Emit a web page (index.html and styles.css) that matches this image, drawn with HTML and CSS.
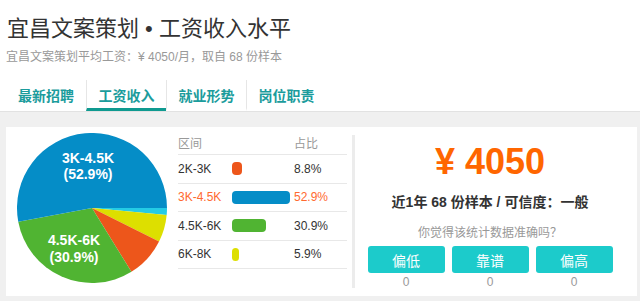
FILE: index.html
```html
<!DOCTYPE html>
<html lang="zh-CN">

<head>
	<meta charset="UTF-8">
	<meta name="viewport" content="width=device-width, initial-scale=1.0">
	<title>宜昌文案策划工资收入水平</title>
	<link rel="stylesheet" href="styles.css">
</head>

<body>
	<div class="head">
		<h1>宜昌文案策划 • 工资收入水平</h1>
		<p class="sub">宜昌文案策划平均工资：¥ 4050/月，取自 68 份样本</p>
	</div>

	<ul class="tabs">
		<li>最新招聘</li>
		<li class="active">工资收入</li>
		<li>就业形势</li>
		<li>岗位职责</li>
	</ul>

	<div class="main">
		<div class="card">
			<div class="chart">
				<!-- Salary distribution pie -->
				<svg class="pie" width="150" height="151" viewBox="0 0 150 151">
					<path fill="#24cbe5" d="M75,75 L150,75 A75,75 0 0,1 149.67,82.06 Z"></path>
					<path fill="#dddf00" d="M75,75 L149.67,82.06 A75,75 0 0,1 142.06,108.58 Z"></path>
					<path fill="#ed561b" d="M75,75 L142.06,108.58 A75,75 0 0,1 114.41,138.81 Z"></path>
					<path fill="#50b432" d="M75,75 L114.41,138.81 A75,75 0 0,1 1.26,88.67 Z"></path>
					<path fill="#058dc7" d="M75,75 L1.26,88.67 A75,75 0 1,1 150,75 Z"></path>
					<text class="pie-label" x="71" y="29.5">3K-4.5K</text>
					<text class="pie-label" x="71" y="46">(52.9%)</text>
					<text class="pie-label" x="57" y="112">4.5K-6K</text>
					<text class="pie-label" x="57" y="129">(30.9%)</text>
				</svg>

				<div class="dist">
					<div class="row row-head">
						<span class="range">区间</span>
						<span class="bar-cell"></span>
						<span class="pct">占比</span>
					</div>
					<div class="row">
						<span class="range">2K-3K</span>
						<span class="bar-cell"><i class="bar orange" style="width: 9.7px;"></i></span>
						<span class="pct">8.8%</span>
					</div>
					<div class="row current">
						<span class="range">3K-4.5K</span>
						<span class="bar-cell"><i class="bar blue" style="width: 58px;"></i></span>
						<span class="pct">52.9%</span>
					</div>
					<div class="row">
						<span class="range">4.5K-6K</span>
						<span class="bar-cell"><i class="bar green" style="width: 34px;"></i></span>
						<span class="pct">30.9%</span>
					</div>
					<div class="row">
						<span class="range">6K-8K</span>
						<span class="bar-cell"><i class="bar yellow" style="width: 6.5px;"></i></span>
						<span class="pct">5.9%</span>
					</div>
				</div>
			</div>

			<div class="summary">
				<div class="price">¥ 4050</div>
				<div class="stat">近1年 68 份样本 / 可信度：一般</div>
				<div class="ask">你觉得该统计数据准确吗？</div>
				<div class="votes">
					<div class="vote"><button>偏低</button><span>0</span></div>
					<div class="vote"><button>靠谱</button><span>0</span></div>
					<div class="vote"><button>偏高</button><span>0</span></div>
				</div>
			</div>
		</div>
	</div>
</body>

</html>
```

FILE: styles.css
```css
body {
	margin: 0;
	font-family: 'Liberation Sans', 'Noto Sans CJK SC', sans-serif;
	color: #333333;
	background-color: #ffffff;
}

.head {
	padding: 14px 0 0 6px;
}

.head h1 {
	margin: 0 0 0 1px;
	font-size: 22px;
	font-weight: normal;
	line-height: 30px;
	color: #333333;
}

.head .sub {
	margin: 4px 0 0;
	font-size: 12px;
	line-height: 18px;
	color: #999999;
}

.tabs {
	list-style: none;
	display: flex;
	margin: 14px 0 0 6px;
	padding: 0;
}

.tabs li {
	box-sizing: border-box;
	width: 80px;
	padding: 6px 0 2px;
	line-height: 20px;
	text-align: center;
	font-size: 14px;
	font-weight: bold;
	color: #1b9c9c;
	border-bottom: 3px solid transparent;
}

.tabs li + li {
	border-left: 1px solid #e6e6e6;
}

.tabs li.active {
	border-bottom-color: #0f9a90;
}

.main {
	background-color: #f0f0f0;
	border-top: 1px solid #e2e2e2;
	padding: 15px 3px 5px 6px;
}

.card {
	display: flex;
	height: 169px;
	background-color: #ffffff;
}

.chart {
	display: flex;
	align-items: flex-start;
	padding: 4px 5px 0 11px;
}

.pie {
	display: block;
	margin-top: 2px;
}

.pie-label {
	fill: #ffffff;
	font-family: 'Liberation Sans', sans-serif;
	font-size: 14px;
	font-weight: bold;
	text-anchor: middle;
}

.dist {
	width: 169px;
	margin-left: 11px;
	font-size: 12px;
}

.row {
	display: flex;
	align-items: center;
	height: 27.5px;
	border-bottom: 1px solid #e8e8e8;
}

.row-head {
	height: 23px;
	color: #999999;
}

.range {
	width: 54px;
}

.bar-cell {
	width: 62px;
	display: flex;
}

.bar {
	display: block;
	height: 13px;
	border-radius: 4px;
}

.bar.orange { background-color: #ed561b; }
.bar.blue { background-color: #058dc7; }
.bar.green { background-color: #50b432; }
.bar.yellow { background-color: #dddf00; }

.row.current {
	color: #ff6a2f;
}

.summary {
	flex: 1;
	margin: 8px 0;
	padding: 7px 12px 0 0;
	border-left: 3px solid #ececec;
	text-align: center;
}

.price {
	font-size: 36px;
	font-weight: bold;
	line-height: 40px;
	color: #ff6600;
}

.stat {
	margin-top: 10px;
	font-size: 14px;
	font-weight: bold;
	line-height: 20px;
}

.ask {
	margin-top: 13px;
	font-size: 12px;
	line-height: 16px;
	color: #999999;
}

.votes {
	display: flex;
	justify-content: center;
	gap: 7px;
	margin-top: 5px;
}

.vote {
	display: flex;
	flex-direction: column;
	align-items: center;
}

.vote button {
	width: 77px;
	height: 27px;
	padding: 0;
	border: none;
	border-radius: 3px;
	background-color: #1ccbcb;
	color: #ffffff;
	font-family: 'Liberation Sans', 'Noto Sans CJK SC', sans-serif;
	font-size: 14px;
	cursor: pointer;
}

.vote span {
	margin-top: 2px;
	font-size: 12px;
	line-height: 14px;
	color: #999999;
}
```
